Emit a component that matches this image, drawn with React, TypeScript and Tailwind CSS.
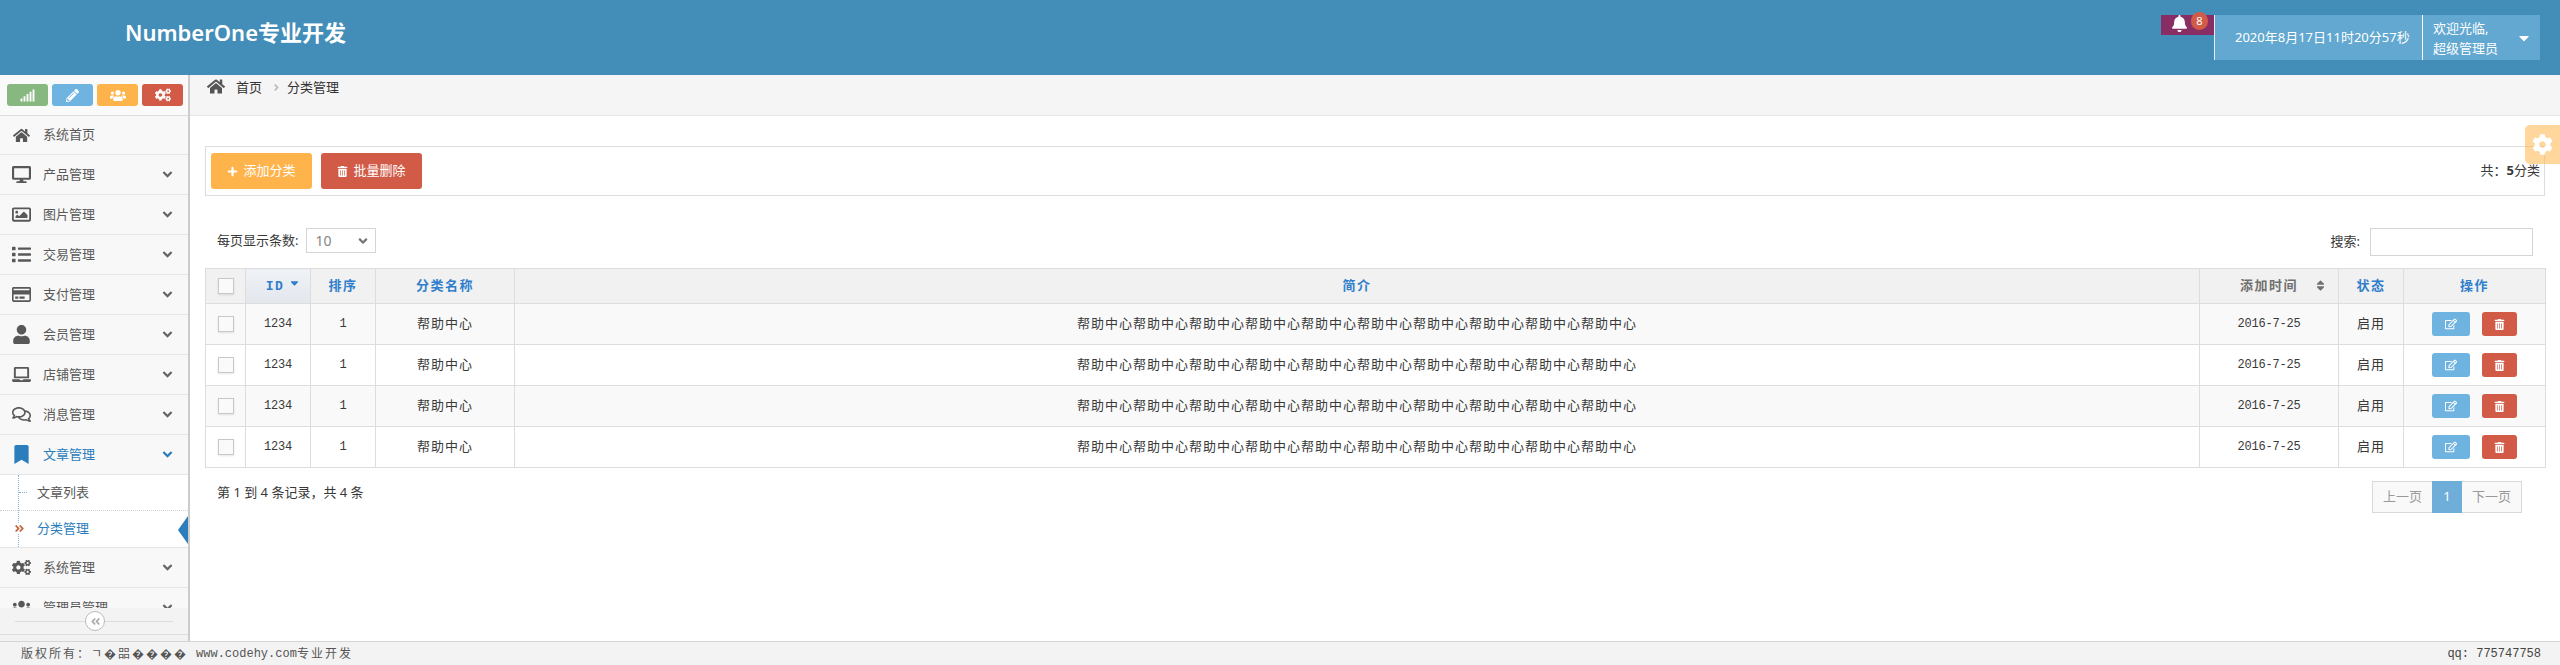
import {
  FaAngleDoubleLeft,
  FaAngleDown,
  FaAngleRight,
  FaBell,
  FaBookmark,
  FaCaretDown,
  FaCog,
  FaCogs,
  FaDesktop,
  FaHome,
  FaLaptop,
  FaList,
  FaPencilAlt,
  FaPlus,
  FaRegComments,
  FaRegCreditCard,
  FaRegEdit,
  FaRegImage,
  FaSignal,
  FaSort,
  FaSortDown,
  FaTrashAlt,
  FaUser,
  FaUsers,
} from "react-icons/fa";

const SANS = "font-['Noto_Sans','Noto_Sans_CJK_SC',sans-serif]";
const MONO = "font-['Liberation_Mono','Noto_Sans_CJK_SC',monospace]";

const MENU_TOP = [
  { label: "产品管理", icon: FaDesktop },
  { label: "图片管理", icon: FaRegImage },
  { label: "交易管理", icon: FaList },
  { label: "支付管理", icon: FaRegCreditCard },
  { label: "会员管理", icon: FaUser },
  { label: "店铺管理", icon: FaLaptop },
  { label: "消息管理", icon: FaRegComments },
];

const COLUMNS = [
  { label: "排序" },
  { label: "分类名称" },
  { label: "简介" },
];

const ROWS = [0, 1, 2, 3];

function MenuRow({ label, icon: Icon, active }: { label: string; icon: typeof FaHome; active?: boolean }) {
  return (
    <div className={`flex h-10 shrink-0 items-center border-b border-[#e5e5e5] bg-[#f8f8f8] ${active ? "text-[#2b7dbc]" : "text-[#585858]"}`}>
      <span className="flex w-[43px] shrink-0 justify-center pr-[1px]">
        <Icon className="h-[19px] w-[19px]" />
      </span>
      <span className="flex-1 text-[13px]">{label}</span>
      <FaAngleDown className={`mr-[13px] h-[15px] w-[15px] ${active ? "text-[#2b7dbc]" : "text-[#666]"}`} />
    </div>
  );
}

function Checkbox() {
  return <span className="mx-auto block h-4 w-4 border border-[#c8c8c8] bg-[#fafafa] shadow-[0_1px_2px_rgba(0,0,0,0.1)]" />;
}

export default function App() {
  return (
    <div className={`flex h-screen flex-col overflow-hidden bg-white ${SANS}`}>
      {/* Top bar */}
      <header className="flex h-[75px] shrink-0 items-start bg-[#438eb9] text-white">
        <div className="ml-[125px] mt-[16px] text-[22px] leading-[32px] font-semibold">NumberOne专业开发</div>
        <div className="ml-auto mr-5 mt-[15px] flex h-[45px]">
          <div className="relative h-5 w-[53px] bg-[#892e65]">
            <FaBell className="absolute left-[10px] top-0 h-[17px] w-[17px]" />
            <span className="absolute left-[30px] top-[-3px] flex h-[18px] w-[17px] items-center justify-center rounded-full bg-[#d15b47] text-[11px]">8</span>
          </div>
          <div className="flex w-[208px] items-center border-l border-[#e4eef5] bg-[#62a8d1] pl-5 text-[13px]">2020年8月17日11时20分57秒</div>
          <div className="flex w-[118px] items-center border-l border-white bg-[#62a8d1] pl-[10px]">
            <div className="flex-1 text-[13px] leading-5">
              <div>欢迎光临,</div>
              <div>超级管理员</div>
            </div>
            <FaCaretDown className="mr-[8px] h-[16px] w-[16px]" />
          </div>
        </div>
      </header>

      <div className="flex min-h-0 flex-1">
        {/* Sidebar */}
        <aside className="flex w-[190px] shrink-0 flex-col border-r-2 border-[#cccccc] bg-[#f2f2f2]">
          <div className="flex h-[41px] shrink-0 items-start gap-1 border-b border-[#dddddd] bg-[#fafafa] pl-[7px] pt-[9px] text-white">
            <button className="flex h-[22px] w-[41px] items-center justify-center rounded-[3px] bg-[#87b87f]"><FaSignal className="h-[13px] w-[15px]" /></button>
            <button className="flex h-[22px] w-[41px] items-center justify-center rounded-[3px] bg-[#6fb3e0]"><FaPencilAlt className="h-[13px] w-[13px]" /></button>
            <button className="flex h-[22px] w-[41px] items-center justify-center rounded-[3px] bg-[#ffb44b]"><FaUsers className="h-[15px] w-[16px]" /></button>
            <button className="flex h-[22px] w-[41px] items-center justify-center rounded-[3px] bg-[#d15b47]"><FaCogs className="h-[14px] w-[16px]" /></button>
          </div>

          <nav className="flex h-[492px] shrink-0 flex-col overflow-hidden">
            <div className="flex h-[39px] shrink-0 items-center border-b border-[#e5e5e5] bg-[#f8f8f8] text-[#585858]">
              <span className="flex w-[43px] shrink-0 justify-center pr-[1px]"><FaHome className="h-[17px] w-[17px]" /></span>
              <span className="text-[13px]">系统首页</span>
            </div>
            {MENU_TOP.map((m) => (
              <MenuRow key={m.label} label={m.label} icon={m.icon} />
            ))}
            <MenuRow label="文章管理" icon={FaBookmark} active />

            <div className="relative shrink-0 border-b border-[#e5e5e5] bg-white text-[13px]">
              <span className="absolute bottom-0 left-[18px] top-0 border-l border-dotted border-[#7fb5dd]" />
              <div className="relative flex h-9 items-center border-b border-dotted border-[#d0d0d0] pl-[37px] text-[#585858]">
                <span className="absolute left-[19px] top-[17px] w-2 border-t border-dotted border-[#7fb5dd]" />
                文章列表
              </div>
              <div className="relative flex h-9 items-center pl-[37px] text-[#2b7dbc]">
                <FaAngleDoubleLeft className="absolute left-[14px] top-[12px] h-[11px] w-[11px] rotate-180 bg-white text-[#c86139]" />
                分类管理
                <span className="absolute right-0 top-[5px] border-y-[14px] border-r-[10px] border-y-transparent border-r-[#2b7dbc]" />
              </div>
            </div>

            <MenuRow label="系统管理" icon={FaCogs} />
            <MenuRow label="管理员管理" icon={FaUsers} />
          </nav>

          {/* Collapse handle */}
          <div className="relative flex h-[27px] shrink-0 items-center border-b border-[#dddddd] bg-[#f3f3f3] px-[15px]">
            <div className="w-full border-t border-[#dddddd]" />
            <span className="absolute left-[85px] top-[3px] flex h-5 w-5 items-center justify-center rounded-full border border-[#bbbbbb] bg-white text-[#aaaaaa]">
              <FaAngleDoubleLeft className="h-[11px] w-[11px]" />
            </span>
          </div>
        </aside>

        {/* Main */}
        <main className="relative min-w-0 flex-1 text-[#393939]">
          <div className="flex h-[41px] items-start border-b border-[#e5e5e5] bg-[#f5f5f5] pl-[17px] text-[13px] text-[#333333]">
            <FaHome className="mt-[3px] h-[17px] w-[18px] text-[#555555]" />
            <span className="ml-[11px] leading-[24px]">首页</span>
            <FaAngleRight className="ml-[9px] mt-[7px] h-[11px] w-[11px] text-[#bbbbbb]" />
            <span className="ml-[5px] leading-[24px]">分类管理</span>
          </div>

          <button className="absolute right-0 top-[50px] z-10 flex h-[39px] w-[35px] items-center justify-center rounded-l-[5px] bg-[#ffb44b]/55 text-white">
            <FaCog className="h-[21px] w-[21px]" />
          </button>

          <div className="ml-[15px] mr-[15px] mt-[30px] flex h-[50px] items-center border border-[#dddddd] pl-[5px] pr-[4px]">
            <button className="flex h-9 w-[101px] items-center justify-center gap-[5px] rounded-[3px] bg-[#ffb44b] text-[13px] text-white">
              <FaPlus className="h-[11px] w-[11px]" />添加分类
            </button>
            <button className="ml-[9px] flex h-9 w-[101px] items-center justify-center gap-[5px] rounded-[3px] bg-[#d15b47] text-[13px] text-white">
              <FaTrashAlt className="h-[11px] w-[11px]" />批量删除
            </button>
            <span className="ml-auto text-[13px]">共：<b>5</b>分类</span>
          </div>

          <div className="ml-[27px] mr-[27px] mt-[32px] flex h-[28px] items-start justify-between">
            <div className="flex items-center text-[13px]">
              每页显示条数:
              <span className="ml-2 flex h-[25px] w-[70px] items-center justify-between border border-[#d5d5d5] pl-2 pr-[5px] text-[14px] text-[#858585]">
                10
                <FaAngleDown className="h-[14px] w-[14px] text-[#777]" />
              </span>
            </div>
            <div className="flex items-center text-[13px]">
              搜索:
              <span className="ml-[10px] block h-[28px] w-[163px] border border-[#d5d5d5]" />
            </div>
          </div>

          <table className="ml-[15px] mt-[12px] w-[2340px] table-fixed border-collapse text-center">
            <colgroup>
              <col className="w-[40px]" />
              <col className="w-[65px]" />
              <col className="w-[65px]" />
              <col className="w-[139px]" />
              <col className="w-[1685px]" />
              <col className="w-[139px]" />
              <col className="w-[65px]" />
              <col className="w-[142px]" />
            </colgroup>
            <thead>
              <tr className="h-[35px] bg-[#f1f1f1] text-[13px] font-bold tracking-[1.5px] text-[#307ecc]">
                <th className="border border-[#dddddd] p-0"><Checkbox /></th>
                <th className="border border-[#dddddd] bg-gradient-to-b from-[#eff3f8] to-[#e3e7ed] p-0">
                  <span className="relative inline-block pr-[6px]">
                    <span className={MONO}>ID</span>
                    <FaSortDown className="absolute left-[22px] top-[-2px] h-[13px] w-[13px]" />
                  </span>
                </th>
                {COLUMNS.map((c) => (
                  <th key={c.label} className="border border-[#dddddd] p-0">{c.label}</th>
                ))}
                <th className="relative border border-[#dddddd] p-0 text-[#707070]">
                  添加时间
                  <FaSort className="absolute right-[11px] top-[10px] h-[13px] w-[13px]" />
                </th>
                <th className="border border-[#dddddd] p-0">状态</th>
                <th className="border border-[#dddddd] p-0">操作</th>
              </tr>
            </thead>
            <tbody>
              {ROWS.map((r) => (
                <tr key={r} className={`h-[41px] text-[13px] tracking-[1px] text-[#393939] ${r % 2 === 0 ? "bg-[#f9f9f9]" : "bg-white"}`}>
                  <td className="border border-[#dddddd] p-0"><Checkbox /></td>
                  <td className={`border border-[#dddddd] p-0 text-[12px] tracking-[-0.2px] ${MONO}`}>1234</td>
                  <td className={`border border-[#dddddd] p-0 text-[12px] tracking-[-0.2px] ${MONO}`}>1</td>
                  <td className="border border-[#dddddd] p-0">帮助中心</td>
                  <td className="border border-[#dddddd] p-0">帮助中心帮助中心帮助中心帮助中心帮助中心帮助中心帮助中心帮助中心帮助中心帮助中心</td>
                  <td className={`border border-[#dddddd] p-0 text-[12px] tracking-[-0.2px] ${MONO}`}>2016-7-25</td>
                  <td className="border border-[#dddddd] p-0">启用</td>
                  <td className="border border-[#dddddd] p-0">
                    <div className="flex justify-center gap-3 pr-[1px] text-white">
                      <button className="flex h-6 w-[38px] items-center justify-center rounded-[3px] bg-[#6fb3e0]"><FaRegEdit className="h-3 w-3" /></button>
                      <button className="flex h-6 w-[35px] items-center justify-center rounded-[3px] bg-[#d15b47]"><FaTrashAlt className="h-[11px] w-[11px]" /></button>
                    </div>
                  </td>
                </tr>
              ))}
            </tbody>
          </table>

          <div className="ml-[27px] mr-[38px] mt-[13px] flex items-start justify-between">
            <span className="mt-[1px] text-[13px] leading-5">第 1 到 4 条记录，共 4 条</span>
            <div className="flex h-8 border border-[#d9d9d9] bg-[#f9f9f9] text-[13px] text-[#999999]">
              <span className="flex w-[59px] items-center justify-center">上一页</span>
              <span className="my-[-1px] flex w-[30px] items-center justify-center bg-[#6faed9] text-white">1</span>
              <span className="flex w-[59px] items-center justify-center">下一页</span>
            </div>
          </div>
        </main>
      </div>

      {/* Footer */}
      <footer className="flex h-6 shrink-0 items-center border-t border-[#d5d5d5] bg-[#f3f3f3] pl-[21px] text-[12px] text-[#555555]">
        <span className="tracking-[2px]">版权所有：ㄱ�㗊����</span>
        <span className={`ml-2 ${MONO}`}>www.codehy.com</span>
        <span className="tracking-[2px]">专业开发</span>
        <span className="ml-auto mr-[19px] text-[#444]"><span className={MONO}>qq: 775747758</span></span>
      </footer>
    </div>
  );
}
